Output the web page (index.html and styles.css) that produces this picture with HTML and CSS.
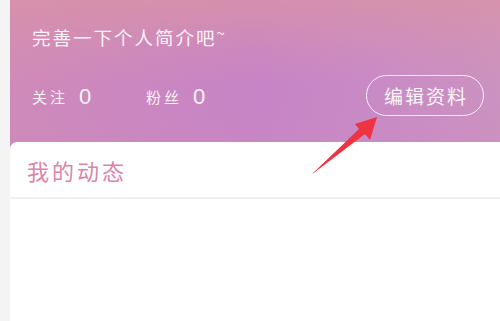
FILE: index.html
```html
<!DOCTYPE html>
<html lang="zh">
<head>
<meta charset="utf-8">
<link rel="stylesheet" href="styles.css">
</head>
<body>
<div class="page">
  <div class="side"></div>
  <div class="main">
    <div class="header">
      <div class="bio">完善一下个人简介吧<span class="tilde">~</span></div>
      <div class="stats-row">
        <div class="stats">
          <div class="stat"><span class="label">关注</span><span class="num">0</span></div>
          <div class="stat"><span class="label">粉丝</span><span class="num">0</span></div>
        </div>
        <div class="edit-btn">编辑资料</div>
      </div>
    </div>
    <div class="card">
      <div class="card-title">我的动态</div>
      <div class="card-body"></div>
    </div>
  </div>
  <svg class="arrow" width="500" height="321" viewBox="0 0 500 321">
    <polygon points="311,175 359,129 355,124 377,117 370,140 365,134" fill="#ef3340"/>
  </svg>
</div>
</body>
</html>
```
FILE: styles.css
```css
html, body {
  margin: 0;
  padding: 0;
  background: #ffffff;
}
body {
  font-family: "Noto Sans CJK SC", "Noto Sans", sans-serif;
  overflow: hidden;
}
.page {
  position: relative;
  display: flex;
  width: 500px;
  height: 321px;
}
.side {
  width: 10px;
  background: #f4f4f4;
  flex: none;
}
.main {
  flex: 1;
  display: flex;
  flex-direction: column;
  background: #c98ac0;
}
.header {
  height: 142px;
  box-sizing: border-box;
  padding: 23px 16px 0 22px;
  background:
    linear-gradient(180deg, rgba(218, 148, 165, 0.75) 0%, rgba(218, 148, 165, 0.25) 35%, rgba(218, 148, 165, 0) 60%, rgba(200, 140, 190, 0.2) 100%),
    linear-gradient(90deg, #cf8ab9 0%, #cb87c0 25%, #c784c7 50%, #c98ac6 75%, #cc92c0 100%);
  color: #fff;
}
.bio {
  font-size: 18.5px;
  letter-spacing: 2px;
  line-height: 28px;
  color: #fbf3f7;
}
.tilde {
  font-size: 15px;
  position: relative;
  top: -6px;
  letter-spacing: 0;
}
.stats-row {
  display: flex;
  align-items: center;
  justify-content: space-between;
  margin-top: 22px;
}
.stats {
  display: flex;
  gap: 53px;
  margin-top: 2px;
}
.stat {
  display: flex;
  align-items: center;
  gap: 11px;
}
.label {
  font-size: 15px;
  letter-spacing: 3px;
  color: #faf0f5;
}
.num {
  font-family: "Liberation Sans", "Noto Sans", sans-serif;
  font-size: 22px;
  color: #fbf3f7;
  width: 14px;
}
.edit-btn {
  width: 118px;
  height: 41px;
  box-sizing: border-box;
  border: 1px solid rgba(255, 255, 255, 0.85);
  border-radius: 21px;
  display: flex;
  align-items: center;
  justify-content: center;
  font-size: 19px;
  letter-spacing: 2px;
  padding-left: 2px;
  color: #fdf6fa;
}
.card {
  flex: 1;
  background: #ffffff;
  border-top-left-radius: 7px;
  display: flex;
  flex-direction: column;
}
.card-title {
  height: 57px;
  box-sizing: border-box;
  padding-left: 17px;
  display: flex;
  align-items: center;
  font-size: 22px;
  letter-spacing: 3px;
  color: #dc84ab;
  border-bottom: 2px solid #efefef;
}
.card-body {
  flex: 1;
  background: #ffffff;
}
.arrow {
  position: absolute;
  left: 0;
  top: 0;
  pointer-events: none;
}
```
